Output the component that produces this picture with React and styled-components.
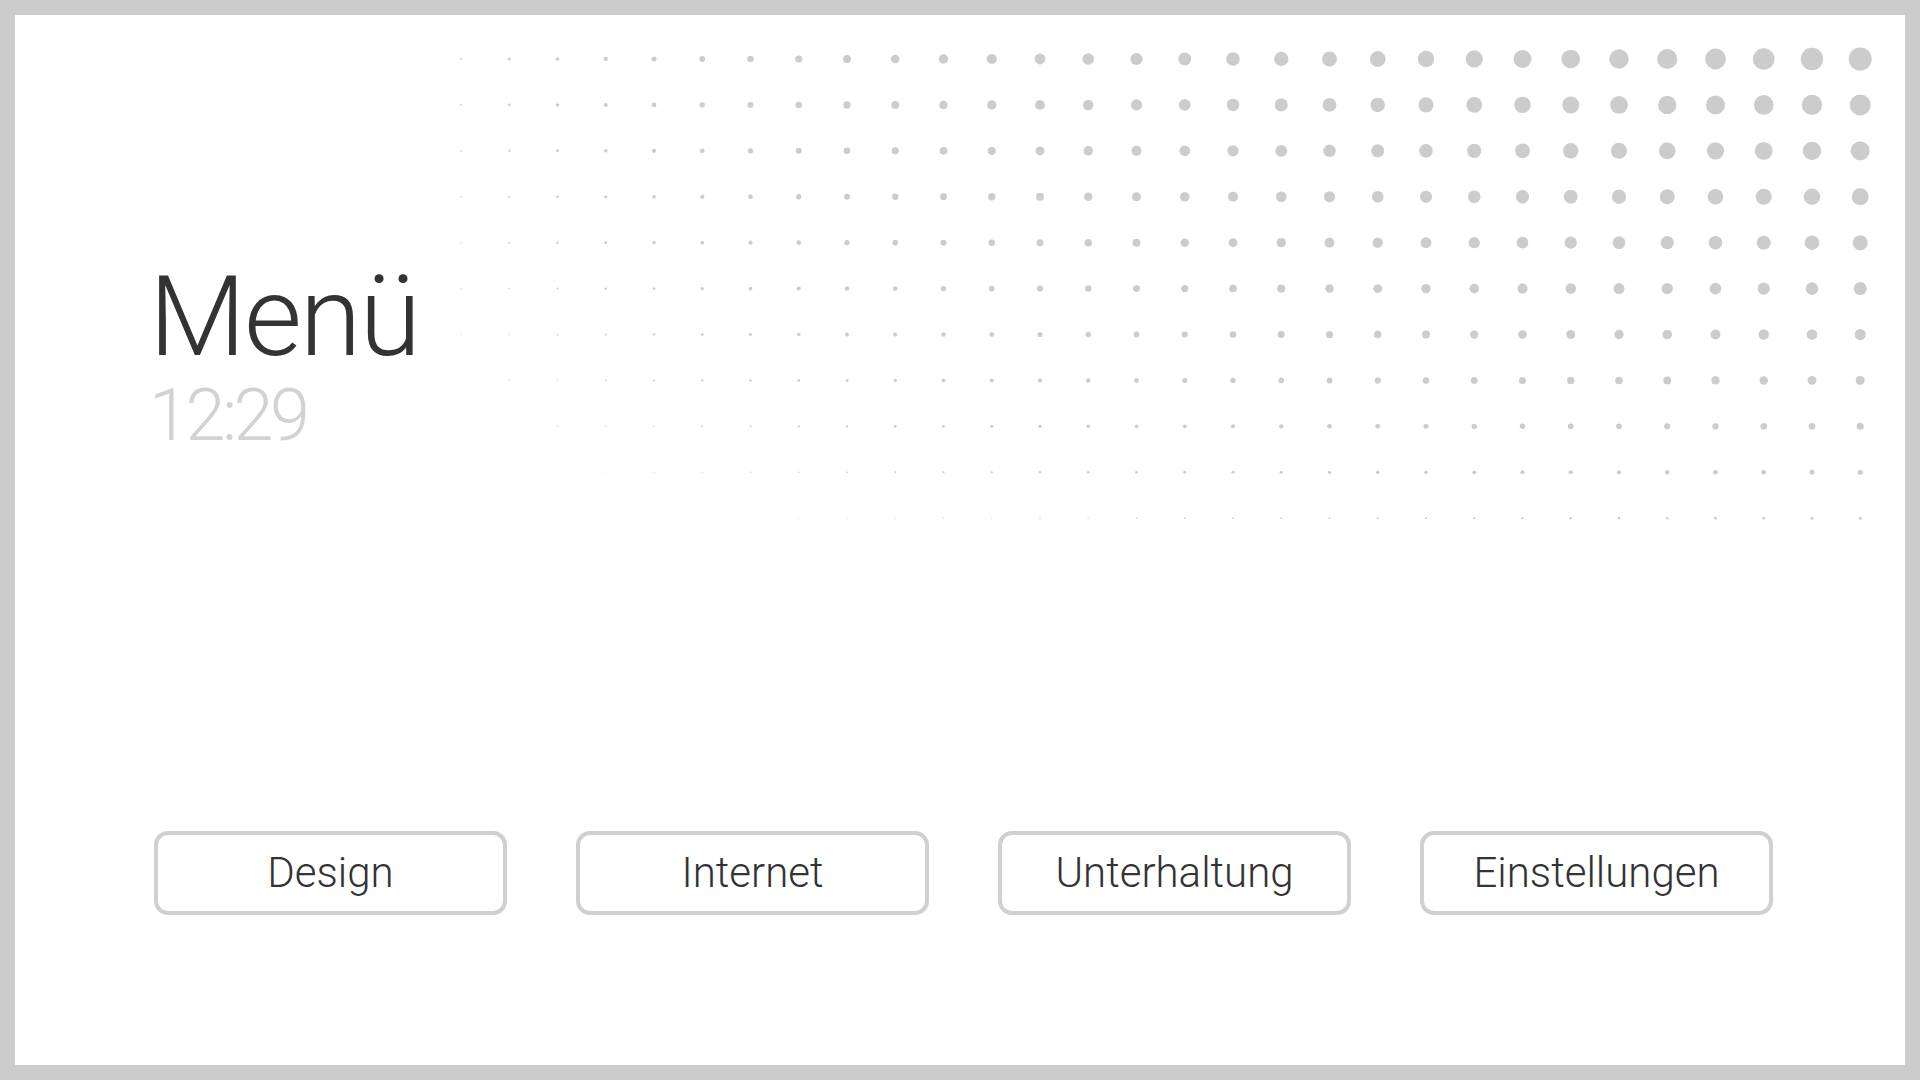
import styled, { createGlobalStyle } from "styled-components";

const GlobalStyle = createGlobalStyle`
  html, body {
    margin: 0;
    padding: 0;
    background: #cccccc;
  }
  * {
    box-sizing: border-box;
  }
`;

const StyledFrame = styled.div`
  width: 100vw;
  height: 100vh;
  padding: 15px;
  background: #cccccc;
`;

const StyledPanel = styled.main`
  display: flex;
  flex-direction: column;
  height: 100%;
  background: #ffffff;
  font-family: Roboto, "Liberation Sans", sans-serif;
`;

const StyledTop = styled.div`
  display: flex;
  justify-content: space-between;
  align-items: flex-start;
`;

const StyledHeading = styled.div`
  display: flex;
  flex-direction: column;
  padding-left: 134px;
  margin-top: 246px;
`;

const StyledTitle = styled.h1`
  margin: 0;
  font-size: 112px;
  line-height: 1;
  font-weight: 300;
  letter-spacing: -2px;
  color: #333333;
`;

const StyledClock = styled.div`
  margin-top: 12px;
  font-size: 72px;
  line-height: 0.86;
  font-weight: 300;
  letter-spacing: -3.5px;
  color: #d2d2d2;
`;

const StyledDots = styled.svg`
  flex-shrink: 0;
  margin-top: 20px;
  margin-right: 21px;
`;

const StyledButtons = styled.nav`
  display: flex;
  gap: 69px;
  margin-top: auto;
  margin-bottom: 150px;
  padding-left: 139px;
`;

const StyledButton = styled.button`
  display: flex;
  align-items: center;
  justify-content: center;
  width: 353px;
  height: 84px;
  padding: 0 0 2px;
  border: 4px solid #d0d0d0;
  border-radius: 14px;
  background: #ffffff;
  font-family: Roboto, "Liberation Sans", sans-serif;
  font-size: 42px;
  font-weight: 300;
  color: #333333;
  cursor: pointer;
`;

const COLS = 30;
const ROWS = 11;
const STEP_X = 48.25;
const STEP_Y = 45.92;
const PAD = 24;

function DotField() {
  const width = PAD * 2 + (COLS - 1) * STEP_X;
  const height = PAD * 2 + (ROWS - 1) * STEP_Y;
  const dots = [];
  for (let r = 0; r < ROWS; r++) {
    for (let c = 0; c < COLS; c++) {
      // c counts columns from the right edge
      const d = (23 - 2 * r) * (1 - c / 32);
      if (d < 0.9) continue;
      dots.push(
        <circle
          key={`${r}-${c}`}
          cx={width - PAD - c * STEP_X}
          cy={PAD + r * STEP_Y}
          r={d / 2}
        />
      );
    }
  }
  return (
    <StyledDots width={width} height={height} viewBox={`0 0 ${width} ${height}`}>
      <g fill="#cccccc">{dots}</g>
    </StyledDots>
  );
}

const items = ["Design", "Internet", "Unterhaltung", "Einstellungen"];

function App() {
  return (
    <>
      <GlobalStyle />
      <StyledFrame>
        <StyledPanel>
          <StyledTop>
            <StyledHeading>
              <StyledTitle>Menü</StyledTitle>
              <StyledClock>12:29</StyledClock>
            </StyledHeading>
            <DotField />
          </StyledTop>
          <StyledButtons>
            {items.map((label) => (
              <StyledButton key={label}>{label}</StyledButton>
            ))}
          </StyledButtons>
        </StyledPanel>
      </StyledFrame>
    </>
  );
}

export default App;
